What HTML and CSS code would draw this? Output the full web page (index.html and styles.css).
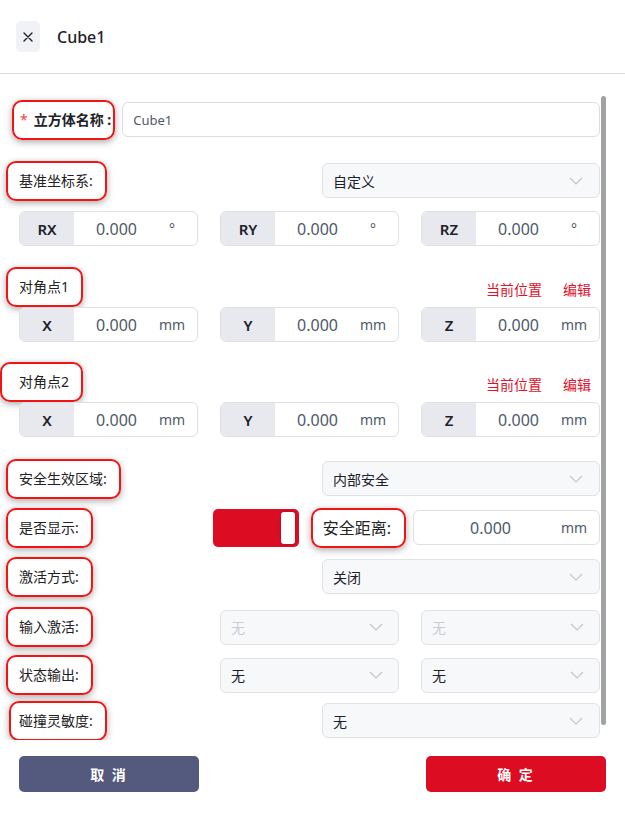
FILE: index.html
```html
<!DOCTYPE html>
<html lang="zh-CN">
<head>
  <meta charset="UTF-8" />
  <meta name="viewport" content="width=device-width, initial-scale=1" />
  <title>Cube1</title>
  <link rel="stylesheet" href="styles.css">
</head>
<body>
  <div class="dialog">
    <header class="head">
      <button class="close" aria-label="关闭">
        <svg width="10" height="10" viewBox="0 0 10 10"><path d="M1 1 L9 9 M9 1 L1 9" stroke="#1d2129" stroke-width="1.4" fill="none" stroke-linecap="round"/></svg>
      </button>
      <span class="title">Cube1</span>
    </header>

    <div class="body">
      <div class="form">
        <!-- 名称 -->
        <div class="row">
          <span class="mark mark-name"><i class="req">*</i>立方体名称 :</span>
          <div class="text-input">Cube1</div>
        </div>

        <!-- 坐标系 -->
        <div class="row loose">
          <span class="mark">基准坐标系:</span>
          <div class="select wide"><span>自定义</span><svg class="chev" width="14" height="8" viewBox="0 0 14 8"><polyline points="1,1 7,7 13,1"/></svg></div>
        </div>
        <div class="row grid3">
          <div class="affix"><span class="pre">RX</span><span class="val">0.000</span><span class="unit">°</span></div>
          <div class="affix"><span class="pre">RY</span><span class="val">0.000</span><span class="unit">°</span></div>
          <div class="affix"><span class="pre">RZ</span><span class="val">0.000</span><span class="unit">°</span></div>
        </div>

        <!-- 对角点1 -->
        <div class="point-head">
          <span class="mark">对角点1</span>
          <div class="links"><a>当前位置</a><a>编辑</a></div>
        </div>
        <div class="grid3 tight">
          <div class="affix"><span class="pre">X</span><span class="val">0.000</span><span class="unit">mm</span></div>
          <div class="affix"><span class="pre">Y</span><span class="val">0.000</span><span class="unit">mm</span></div>
          <div class="affix"><span class="pre">Z</span><span class="val">0.000</span><span class="unit">mm</span></div>
        </div>

        <!-- 对角点2 -->
        <div class="point-head short">
          <span class="mark mark-edge">对角点2</span>
          <div class="links"><a>当前位置</a><a>编辑</a></div>
        </div>
        <div class="grid3 tight">
          <div class="affix"><span class="pre">X</span><span class="val">0.000</span><span class="unit">mm</span></div>
          <div class="affix"><span class="pre">Y</span><span class="val">0.000</span><span class="unit">mm</span></div>
          <div class="affix"><span class="pre">Z</span><span class="val">0.000</span><span class="unit">mm</span></div>
        </div>

        <!-- 安全区域 -->
        <div class="row zone">
          <span class="mark">安全生效区域:</span>
          <div class="select wide"><span>内部安全</span><svg class="chev" width="14" height="8" viewBox="0 0 14 8"><polyline points="1,1 7,7 13,1"/></svg></div>
        </div>
        <div class="row show-row">
          <span class="mark">是否显示:</span>
          <div class="toggle"><span class="knob"></span></div>
          <span class="mark mark-dist">安全距离:</span>
          <div class="dist-input"><span class="val">0.000</span><span class="unit">mm</span></div>
        </div>
        <div class="row">
          <span class="mark">激活方式:</span>
          <div class="select wide"><span>关闭</span><svg class="chev" width="14" height="8" viewBox="0 0 14 8"><polyline points="1,1 7,7 13,1"/></svg></div>
        </div>
        <div class="row grid3">
          <span class="mark">输入激活:</span>
          <div class="select disabled"><span>无</span><svg class="chev" width="14" height="8" viewBox="0 0 14 8"><polyline points="1,1 7,7 13,1"/></svg></div>
          <div class="select disabled"><span>无</span><svg class="chev" width="14" height="8" viewBox="0 0 14 8"><polyline points="1,1 7,7 13,1"/></svg></div>
        </div>
        <div class="row grid3">
          <span class="mark">状态输出:</span>
          <div class="select"><span>无</span><svg class="chev" width="14" height="8" viewBox="0 0 14 8"><polyline points="1,1 7,7 13,1"/></svg></div>
          <div class="select"><span>无</span><svg class="chev" width="14" height="8" viewBox="0 0 14 8"><polyline points="1,1 7,7 13,1"/></svg></div>
        </div>
        <div class="row">
          <span class="mark mark-sens">碰撞灵敏度:</span>
          <div class="select wide"><span>无</span><svg class="chev" width="14" height="8" viewBox="0 0 14 8"><polyline points="1,1 7,7 13,1"/></svg></div>
        </div>
      </div>
      <div class="scrollbar"></div>
    </div>

    <footer class="foot">
      <button class="btn btn-cancel">取 消</button>
      <button class="btn btn-ok">确 定</button>
    </footer>
  </div>
</body>
</html>
```

FILE: styles.css
```css
* {
  box-sizing: border-box;
}

body {
  margin: 0;
  font-family: "Noto Sans", "Noto Sans CJK SC", sans-serif;
  color: #1d2129;
  background-color: #fff;
}

.dialog {
  width: 625px;
  height: 814px;
  display: flex;
  flex-direction: column;
}

/* header */
.head {
  height: 74px;
  flex: none;
  display: flex;
  align-items: center;
  gap: 17px;
  padding-left: 16px;
  border-bottom: 1px solid #dcdde1;
}

.close {
  width: 24px;
  height: 31px;
  border: none;
  border-radius: 5px;
  background-color: #f1f2f5;
  display: flex;
  align-items: center;
  justify-content: center;
  padding: 0;
}

.title {
  font-size: 16px;
  font-weight: 500;
  color: #1d2129;
}

/* scroll body */
.body {
  position: relative;
  height: 666px;
  flex: none;
  overflow: hidden;
}

.form {
  padding: 28px 25px 0 19px;
}

.scrollbar {
  position: absolute;
  left: 601px;
  top: 22px;
  width: 5px;
  height: 629px;
  border-radius: 3px;
  background-color: #a2a2a2;
}

.row {
  height: 35px;
  margin-top: 13px;
  display: flex;
  align-items: center;
}

.row:first-child {
  margin-top: 0;
}

.row.loose {
  margin-top: 26px;
}

.row.zone {
  margin-top: 24px;
}

.grid3 {
  display: grid;
  grid-template-columns: repeat(3, 179px);
  column-gap: 22px;
  align-items: center;
  height: 35px;
}

.grid3.tight {
  margin-top: 0;
}

/* red outlined labels */
.mark {
  display: inline-block;
  line-height: 20px;
  font-size: 14px;
  color: #222;
  white-space: nowrap;
  padding: 8px 12px 8px 11px;
  margin-left: -13px;
  border: 2px solid #f21313;
  border-radius: 10px;
  box-shadow: 0 2px 7px rgba(0, 0, 0, 0.35);
  justify-self: start;
}

.mark-name {
  margin-left: -7px;
  padding: 8px 2px 8px 6px;
  font-weight: 700;
  color: #1d2129;
}

.req {
  font-style: normal;
  color: #f53f3f;
  margin-right: 6px;
  font-weight: 400;
}

.mark-edge {
  margin-left: -19px;
  padding-left: 17px;
}

.mark-sens {
  margin-left: -10px;
  padding-left: 8px;
}

.mark-dist {
  margin-left: 12px;
  padding: 8px 13px 8px 10px;
  font-size: 16px;
}

/* inputs */
.text-input {
  flex: 1;
  height: 35px;
  margin-left: 7px;
  padding-left: 10px;
  display: flex;
  align-items: center;
  font-size: 13px;
  color: #4e5969;
  border: 1px solid #dcdde2;
  border-radius: 6px;
}

.select {
  width: 179px;
  height: 35px;
  display: flex;
  align-items: center;
  justify-content: space-between;
  padding: 0 15px 0 10px;
  font-size: 14px;
  color: #1d2129;
  background-color: #f7f8fa;
  border: 1px solid #e1e2e6;
  border-radius: 6px;
}

.select.wide {
  width: 278px;
  margin-left: auto;
  padding-right: 16px;
}

.select.disabled {
  color: #c9cdd4;
}

.chev polyline {
  fill: none;
  stroke: #c3c6cc;
  stroke-width: 1.2;
}

.affix {
  height: 35px;
  display: flex;
  align-items: center;
  overflow: hidden;
  background-color: #fff;
  border: 1px solid #dfe0e4;
  border-radius: 6px;
}

.affix .pre {
  width: 54px;
  height: 100%;
  display: flex;
  align-items: center;
  justify-content: center;
  background-color: #e8e9ee;
  font-size: 15px;
  font-weight: 600;
  color: #1d2129;
}

.val {
  flex: 1;
  text-align: center;
  font-size: 16px;
  color: #4e5969;
}

.unit {
  width: 26px;
  margin-right: 12px;
  text-align: center;
  font-size: 14px;
  color: #4e5969;
}

.point-head {
  height: 48px;
  margin-top: 13px;
  display: flex;
  align-items: flex-end;
  justify-content: space-between;
}

.point-head.short {
  height: 47px;
}

.links {
  display: flex;
  gap: 21px;
  margin-bottom: 7px;
  padding-right: 9px;
  font-size: 14px;
  line-height: 20px;
}

.links a {
  color: #e0112b;
  cursor: pointer;
}

/* show row */
.show-row {
  height: 37px;
}

.toggle {
  position: relative;
  width: 86px;
  height: 38px;
  margin-left: auto;
  border-radius: 5px;
  background-color: #dc0d22;
}

.knob {
  position: absolute;
  right: 4px;
  top: 3px;
  width: 14px;
  height: 32px;
  border-radius: 3px;
  background-color: #fff;
  box-shadow: 0 0 2px rgba(0, 0, 0, 0.3);
}

.dist-input {
  width: 187px;
  height: 35px;
  margin-left: 7px;
  display: flex;
  align-items: center;
  border: 1px solid #dfe0e4;
  border-radius: 6px;
}

.dist-input .val {
  padding-left: 6px;
}

/* footer */
.foot {
  display: flex;
  justify-content: space-between;
  padding: 16px 19px 0;
}

.btn {
  width: 180px;
  height: 36px;
  border: none;
  border-radius: 5px;
  color: #fff;
  font-family: "Noto Sans", "Noto Sans CJK SC", sans-serif;
  font-size: 14px;
  font-weight: 700;
  letter-spacing: 2px;
  cursor: pointer;
}

.btn-cancel {
  background-color: #535a7d;
}

.btn-ok {
  background-color: #dc0d22;
}
```
